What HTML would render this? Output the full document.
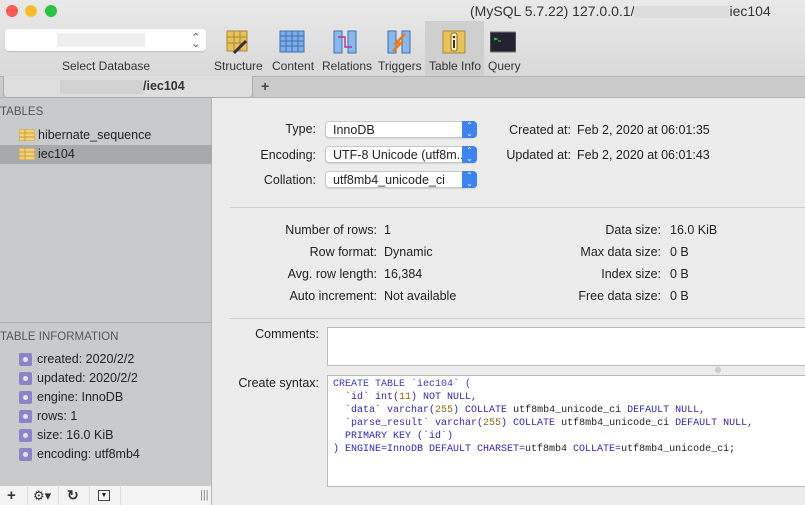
<!DOCTYPE html>
<html><head><meta charset="utf-8"><style>
*{margin:0;padding:0;box-sizing:border-box}
body{width:805px;height:505px;overflow:hidden;font-family:"Liberation Sans",sans-serif;font-size:12.5px;color:#222;background:#ececec;position:relative}
.a{position:absolute;white-space:nowrap}
.r{text-align:right}
.sel{position:absolute;height:17px;background:#fff;border:1px solid #c8c8c8;border-radius:4px;box-shadow:0 1px 1px rgba(0,0,0,.1);font-size:12.5px;padding:1px 7px;line-height:14px}
.sel .b{position:absolute;right:-1px;top:-1px;width:15px;height:17px;background:#3d84f0;border-radius:0 4px 4px 0;color:#fff;font-size:8px;text-align:center;line-height:8px;padding-top:1px}
.ic{position:absolute;width:13px;height:13px;border-radius:2px;background:#8a84c8}
.ic:after{content:"";position:absolute;left:4px;top:4px;width:5px;height:5px;border-radius:50%;background:#e8e6ff}
.code{font-family:"Liberation Mono",monospace;font-size:10px;line-height:13px;color:#2a2aa8}
.k{color:#3a3ab8}.n{color:#8a6a1a}.t{color:#222}
.tb{position:absolute;top:29px;width:26px;height:26px}
.tl{position:absolute;top:59px;font-size:12px;color:#333}
</style></head><body>
<div class="a" style="left:0;top:0;width:805px;height:76px;background:linear-gradient(#e9e9e9,#d9d9d9)"></div>
<div class="a" style="left:6px;top:5px;width:12px;height:12px;border-radius:50%;background:#fd5b55"></div>
<div class="a" style="left:25px;top:5px;width:12px;height:12px;border-radius:50%;background:#fdbb2f"></div>
<div class="a" style="left:45px;top:5px;width:12px;height:12px;border-radius:50%;background:#2bc440"></div>
<div class="a" style="left:470px;top:3px;font-size:14px;color:#333">(MySQL 5.7.22) 127.0.0.1/<span style="display:inline-block;width:95px;height:12px;background:#ddd;vertical-align:middle"></span>iec104</div>
<div class="a" style="left:5px;top:29px;width:201px;height:22px;background:#fff;border-radius:4px;box-shadow:0 1px 1px rgba(0,0,0,.15)"></div>
<div class="a" style="left:57px;top:33px;width:88px;height:14px;background:#eee"></div>
<div class="a" style="left:191px;top:31px;font-size:11px;color:#555">⌃<br></div>
<div class="a" style="left:191px;top:37px;font-size:11px;color:#555">⌄</div>
<div class="a" style="left:62px;top:59px;font-size:12px;color:#333">Select Database</div>
<div class="a" style="left:425px;top:21px;width:59px;height:55px;background:#cfcfcf"></div>
<svg class="tb" style="left:224px" viewBox="0 0 26 26"><rect x="3" y="2" width="20" height="20" fill="#e8c35a" stroke="#a8873a"/><path d="M3 8H23M3 14H23M10 2V22M16 2V22" stroke="#a8873a"/><path d="M10 24L22 12" stroke="#333" stroke-width="3"/></svg>
<svg class="tb" style="left:279px" viewBox="0 0 26 26"><rect x="1" y="2" width="24" height="21" fill="#7eaee8" stroke="#3a6fb8"/><path d="M1 7H25M1 12H25M1 17H25M7 2V23M13 2V23M19 2V23" stroke="#3a6fb8"/></svg>
<svg class="tb" style="left:332px" viewBox="0 0 26 26"><rect x="2" y="2" width="8" height="22" fill="#8ab8ea" stroke="#3a6fb8"/><rect x="16" y="2" width="8" height="22" fill="#8ab8ea" stroke="#3a6fb8"/><path d="M6 8H13V18H20" stroke="#c030a0" stroke-width="1.5" fill="none"/></svg>
<svg class="tb" style="left:386px" viewBox="0 0 26 26"><rect x="2" y="2" width="8" height="22" fill="#8ab8ea" stroke="#3a6fb8"/><rect x="16" y="2" width="8" height="22" fill="#8ab8ea" stroke="#3a6fb8"/><path d="M19 5L10 14H15L7 22" stroke="#f07a10" stroke-width="2.5" fill="none"/></svg>
<svg class="tb" style="left:441px" viewBox="0 0 26 26"><rect x="2" y="2" width="22" height="22" fill="#e8c35a" stroke="#a8873a"/><rect x="10" y="4" width="6" height="18" rx="2" fill="#fff4c8" stroke="#8a6a1a"/><circle cx="13" cy="8" r="1.3" fill="#333"/><path d="M13 11V19" stroke="#333" stroke-width="2"/></svg>
<svg class="tb" style="left:490px" viewBox="0 0 26 26"><rect x="0" y="3" width="26" height="20" rx="1" fill="#223" stroke="#777"/><path d="M4 9L7 10L4 11M8 12H11" stroke="#4c4" fill="none"/></svg>
<div class="tl" style="left:214px">Structure</div>
<div class="tl" style="left:272px">Content</div>
<div class="tl" style="left:322px">Relations</div>
<div class="tl" style="left:378px">Triggers</div>
<div class="tl" style="left:429px">Table Info</div>
<div class="tl" style="left:488px">Query</div>
<div class="a" style="left:0;top:76px;width:805px;height:22px;background:#cbcbcb;border-top:1px solid #b3b3b3;border-bottom:1px solid #b0b0b0"></div>
<div class="a" style="left:3px;top:76px;width:250px;height:22px;background:#dedede;border:1px solid #aaa;border-top:none;border-radius:0 0 4px 4px"></div>
<div class="a" style="left:60px;top:80px;width:83px;height:14px;background:#d2d2d2"></div>
<div class="a" style="left:143px;top:79px;font-size:12.5px;font-weight:bold;color:#333">/iec104</div>
<div class="a" style="left:261px;top:78px;font-size:14px;font-weight:bold;color:#444">+</div>
<div class="a" style="left:0;top:98px;width:212px;height:387px;background:#c9cacb;border-right:1px solid #b5b5b5"></div>
<div class="a" style="left:0;top:322px;width:212px;height:1px;background:#b0b0b0"></div>
<div class="a" style="left:0;top:106px;font-size:11.5px;color:#555">TABLES</div>
<svg class="a" style="left:19px;top:129px" width="16" height="12"><rect width="16" height="12" fill="#f2d27a" stroke="#c8a040"/><path d="M0 4H16M0 8H16M6 0V12" stroke="#c8a040"/></svg>
<div class="a" style="left:38px;top:128px">hibernate_sequence</div>
<div class="a" style="left:0;top:145px;width:212px;height:19px;background:#a8a9aa"></div>
<svg class="a" style="left:19px;top:148px" width="16" height="12"><rect width="16" height="12" fill="#f2d27a" stroke="#c8a040"/><path d="M0 4H16M0 8H16M6 0V12" stroke="#c8a040"/></svg>
<div class="a" style="left:38px;top:147px">iec104</div>
<div class="a" style="left:0;top:331px;font-size:11.5px;color:#555">TABLE INFORMATION</div>
<div class="ic" style="left:19px;top:353px"></div><div class="a" style="left:37px;top:352px">created: 2020/2/2</div>
<div class="ic" style="left:19px;top:372px"></div><div class="a" style="left:37px;top:371px">updated: 2020/2/2</div>
<div class="ic" style="left:19px;top:391px"></div><div class="a" style="left:37px;top:390px">engine: InnoDB</div>
<div class="ic" style="left:19px;top:410px"></div><div class="a" style="left:37px;top:409px">rows: 1</div>
<div class="ic" style="left:19px;top:429px"></div><div class="a" style="left:37px;top:428px">size: 16.0 KiB</div>
<div class="ic" style="left:19px;top:448px"></div><div class="a" style="left:37px;top:447px">encoding: utf8mb4</div>
<div class="a" style="left:0;top:485px;width:212px;height:20px;background:#f4f4f4;border-top:1px solid #ccc;border-right:1px solid #b5b5b5"></div>
<div class="a" style="left:7px;top:487px;font-size:15px;font-weight:bold;color:#333">+</div>
<div class="a" style="left:27px;top:485px;width:1px;height:20px;background:#ddd"></div>
<div class="a" style="left:33px;top:488px;font-size:13px;color:#333">⚙▾</div>
<div class="a" style="left:58px;top:485px;width:1px;height:20px;background:#ddd"></div>
<div class="a" style="left:67px;top:487px;font-size:14px;font-weight:bold;color:#333">↻</div>
<div class="a" style="left:89px;top:485px;width:1px;height:20px;background:#ddd"></div>
<div class="a" style="left:98px;top:490px;width:12px;height:11px;border:1px solid #444;font-size:7px;text-align:center;line-height:9px">▼</div>
<div class="a" style="left:120px;top:485px;width:1px;height:20px;background:#ddd"></div>
<div class="a" style="left:200px;top:489px;font-size:11px;color:#888">|||</div>
<div class="a r" style="left:230px;top:122px;width:86px">Type:</div>
<div class="sel" style="left:325px;top:121px;width:152px">InnoDB<div class="b">⌃<br>⌄</div></div>
<div class="a r" style="left:230px;top:148px;width:86px">Encoding:</div>
<div class="sel" style="left:325px;top:146px;width:152px">UTF-8 Unicode (utf8m...<div class="b">⌃<br>⌄</div></div>
<div class="a r" style="left:230px;top:173px;width:86px">Collation:</div>
<div class="sel" style="left:325px;top:171px;width:152px">utf8mb4_unicode_ci<div class="b">⌃<br>⌄</div></div>
<div class="a r" style="left:480px;top:123px;width:91px">Created at:</div><div class="a" style="left:577px;top:123px">Feb 2, 2020 at 06:01:35</div>
<div class="a r" style="left:480px;top:148px;width:91px">Updated at:</div><div class="a" style="left:577px;top:148px">Feb 2, 2020 at 06:01:43</div>
<div class="a" style="left:230px;top:207px;width:575px;height:1px;background:#cfcfcf"></div>
<div class="a r" style="left:230px;top:223px;width:147px">Number of rows:</div><div class="a" style="left:384px;top:223px">1</div>
<div class="a r" style="left:230px;top:245px;width:147px">Row format:</div><div class="a" style="left:384px;top:245px">Dynamic</div>
<div class="a r" style="left:230px;top:267px;width:147px">Avg. row length:</div><div class="a" style="left:384px;top:267px">16,384</div>
<div class="a r" style="left:230px;top:289px;width:147px">Auto increment:</div><div class="a" style="left:384px;top:289px">Not available</div>
<div class="a r" style="left:520px;top:223px;width:141px">Data size:</div><div class="a" style="left:670px;top:223px">16.0 KiB</div>
<div class="a r" style="left:520px;top:245px;width:141px">Max data size:</div><div class="a" style="left:670px;top:245px">0 B</div>
<div class="a r" style="left:520px;top:267px;width:141px">Index size:</div><div class="a" style="left:670px;top:267px">0 B</div>
<div class="a r" style="left:520px;top:289px;width:141px">Free data size:</div><div class="a" style="left:670px;top:289px">0 B</div>
<div class="a" style="left:230px;top:318px;width:575px;height:1px;background:#cfcfcf"></div>
<div class="a r" style="left:230px;top:327px;width:89px">Comments:</div>
<div class="a" style="left:327px;top:327px;width:480px;height:39px;background:#fff;border:1px solid #bbb"></div>
<div class="a" style="left:715px;top:367px;width:6px;height:6px;border-radius:50%;background:#ccc"></div>
<div class="a r" style="left:230px;top:376px;width:89px">Create syntax:</div>
<div class="a code" style="left:327px;top:375px;width:480px;height:112px;background:#fff;border:1px solid #bbb;padding:2px 5px">
<div class="k">CREATE TABLE `iec104` (</div>
<div>&nbsp;&nbsp;`id` int(<span class="n">11</span>) NOT NULL,</div>
<div>&nbsp;&nbsp;`data` varchar(<span class="n">255</span>) COLLATE <span class="t">utf8mb4_unicode_ci</span> DEFAULT NULL,</div>
<div>&nbsp;&nbsp;`parse_result` varchar(<span class="n">255</span>) COLLATE <span class="t">utf8mb4_unicode_ci</span> DEFAULT NULL,</div>
<div>&nbsp;&nbsp;PRIMARY KEY (`id`)</div>
<div>) ENGINE=InnoDB DEFAULT CHARSET=<span class="t">utf8mb4</span> COLLATE=<span class="t">utf8mb4_unicode_ci;</span></div>
</div>
</body></html>
